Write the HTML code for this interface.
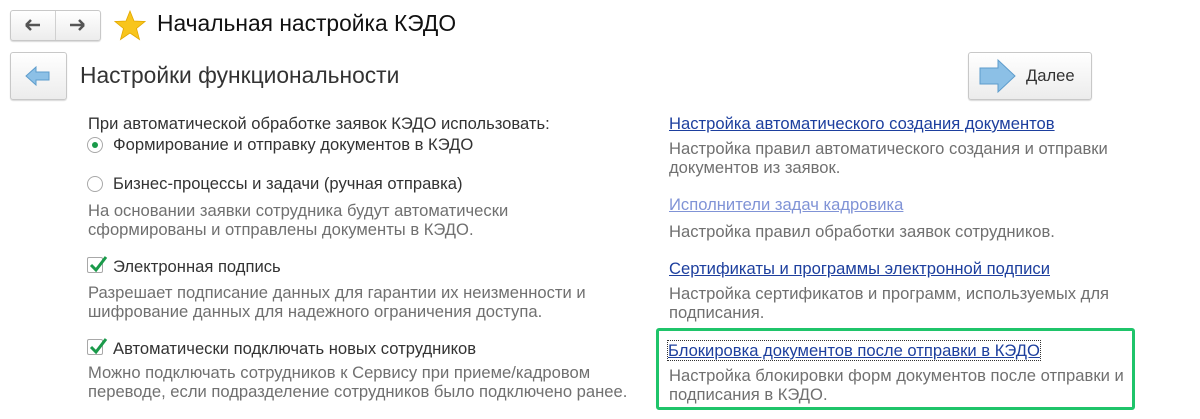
<!DOCTYPE html>
<html><head><meta charset="utf-8"><style>
body{margin:0;width:1200px;height:419px;background:#fff;font-family:"Liberation Sans",Arial,sans-serif;position:relative;overflow:hidden;color:#333}
.a{position:absolute;white-space:nowrap}
.btn{position:absolute;border:1px solid #c8c8c8;border-radius:3px;background:linear-gradient(#fff,#ececec);box-shadow:0 1px 1px rgba(0,0,0,.15);box-sizing:border-box}
.t{font-size:16.6px;line-height:19px}
.h{color:#707070;font-size:16.6px;line-height:19px}
.l{color:#1d3f9e;text-decoration:underline;font-size:16.6px;line-height:19px}
.chk{position:absolute;width:16px;height:16px;border:1px solid #a8a8a8;box-sizing:border-box;background:#fff;border-radius:2px}
.rad{position:absolute;width:16px;height:16px;border:1px solid #a8a8a8;box-sizing:border-box;border-radius:50%;background:#fff}
</style></head><body>
<div class="btn" style="left:10px;top:10px;width:91px;height:31px"></div>
<div class="a" style="left:55px;top:11px;width:1px;height:29px;background:#d0d0d0"></div>
<svg class="a" style="left:22px;top:16px" width="22" height="18"><path d="M4 9H18M4 9L9 4M4 9L9 14" stroke="#555" stroke-width="2.5" fill="none"/></svg>
<svg class="a" style="left:66px;top:16px" width="22" height="18"><path d="M18 9H4M18 9L13 4M18 9L13 14" stroke="#555" stroke-width="2.5" fill="none"/></svg>
<svg class="a" style="left:114px;top:10px" width="32" height="31"><polygon points="16,1 20,11 31,11.5 22.5,18.5 25.5,29.5 16,23 6.5,29.5 9.5,18.5 1,11.5 12,11" fill="#f8c51c" stroke="#e2a800" stroke-width="0.8"/></svg>
<div class="a" style="left:157px;top:10px;font-size:22.8px;line-height:26px;color:#111">Начальная настройка КЭДО</div>
<div class="btn" style="left:10px;top:52px;width:57px;height:48px"></div>
<svg class="a" style="left:24px;top:64px" width="28" height="24"><polygon points="2,12 12,3 12,8 25,8 25,16 12,16 12,21" fill="#8cc0e6" stroke="#5d9ccc" stroke-width="1"/></svg>
<div class="a" style="left:80px;top:62px;font-size:22.8px;line-height:26px;color:#333">Настройки функциональности</div>
<div class="btn" style="left:968px;top:52px;width:124px;height:48px"></div>
<svg class="a" style="left:978px;top:58px" width="40" height="36"><polygon points="2,10 20,10 20,2 37,18 20,34 20,26 2,26" fill="#8cc0e6" stroke="#5d9ccc" stroke-width="1"/></svg>
<div class="a t" style="left:1026px;top:66px">Далее</div>

<div class="a t" style="left:88px;top:114px">При автоматической обработке заявок КЭДО использовать:</div>
<div class="rad" style="left:87px;top:137px"></div><div class="a" style="left:92px;top:142px;width:6px;height:6px;border-radius:50%;background:#1a9a4a"></div>
<div class="a t" style="left:113px;top:135px">Формирование и отправку документов в КЭДО</div>
<div class="rad" style="left:87px;top:176px"></div>
<div class="a t" style="left:113px;top:174px">Бизнес-процессы и задачи (ручная отправка)</div>
<div class="a h" style="left:88px;top:201px">На основании заявки сотрудника будут автоматически<br>сформированы и отправлены документы в КЭДО.</div>
<div class="chk" style="left:87px;top:257px"></div>
<svg class="a" style="left:87px;top:253px" width="22" height="22"><path d="M4 12L9 17L19 4" stroke="#1a9a4a" stroke-width="3" fill="none"/></svg>
<div class="a t" style="left:113px;top:257px">Электронная подпись</div>
<div class="a h" style="left:88px;top:283px">Разрешает подписание данных для гарантии их неизменности и<br>шифрование данных для надежного ограничения доступа.</div>
<div class="chk" style="left:87px;top:339px"></div>
<svg class="a" style="left:87px;top:335px" width="22" height="22"><path d="M4 12L9 17L19 4" stroke="#1a9a4a" stroke-width="3" fill="none"/></svg>
<div class="a t" style="left:113px;top:339px">Автоматически подключать новых сотрудников</div>
<div class="a h" style="left:88px;top:363px">Можно подключать сотрудников к Сервису при приеме/кадровом<br>переводе, если подразделение сотрудников было подключено ранее.</div>

<div class="a l" style="left:669px;top:114px">Настройка автоматического создания документов</div>
<div class="a h" style="left:669px;top:139px">Настройка правил автоматического создания и отправки<br>документов из заявок.</div>
<div class="a l" style="left:669px;top:195px;color:#8093d6">Исполнители задач кадровика</div>
<div class="a h" style="left:669px;top:222px">Настройка правил обработки заявок сотрудников.</div>
<div class="a l" style="left:669px;top:259px">Сертификаты и программы электронной подписи</div>
<div class="a h" style="left:669px;top:284px">Настройка сертификатов и программ, используемых для<br>подписания.</div>
<div class="a" style="left:656px;top:328px;width:479px;height:82px;border:3px solid #1fc46a;border-radius:3px;box-sizing:border-box"></div>
<div class="a l" style="left:668px;top:341px;outline:1px dotted #333">Блокировка документов после отправки в КЭДО</div>
<div class="a h" style="left:669px;top:366px">Настройка блокировки форм документов после отправки и<br>подписания в КЭДО.</div>
</body></html>
